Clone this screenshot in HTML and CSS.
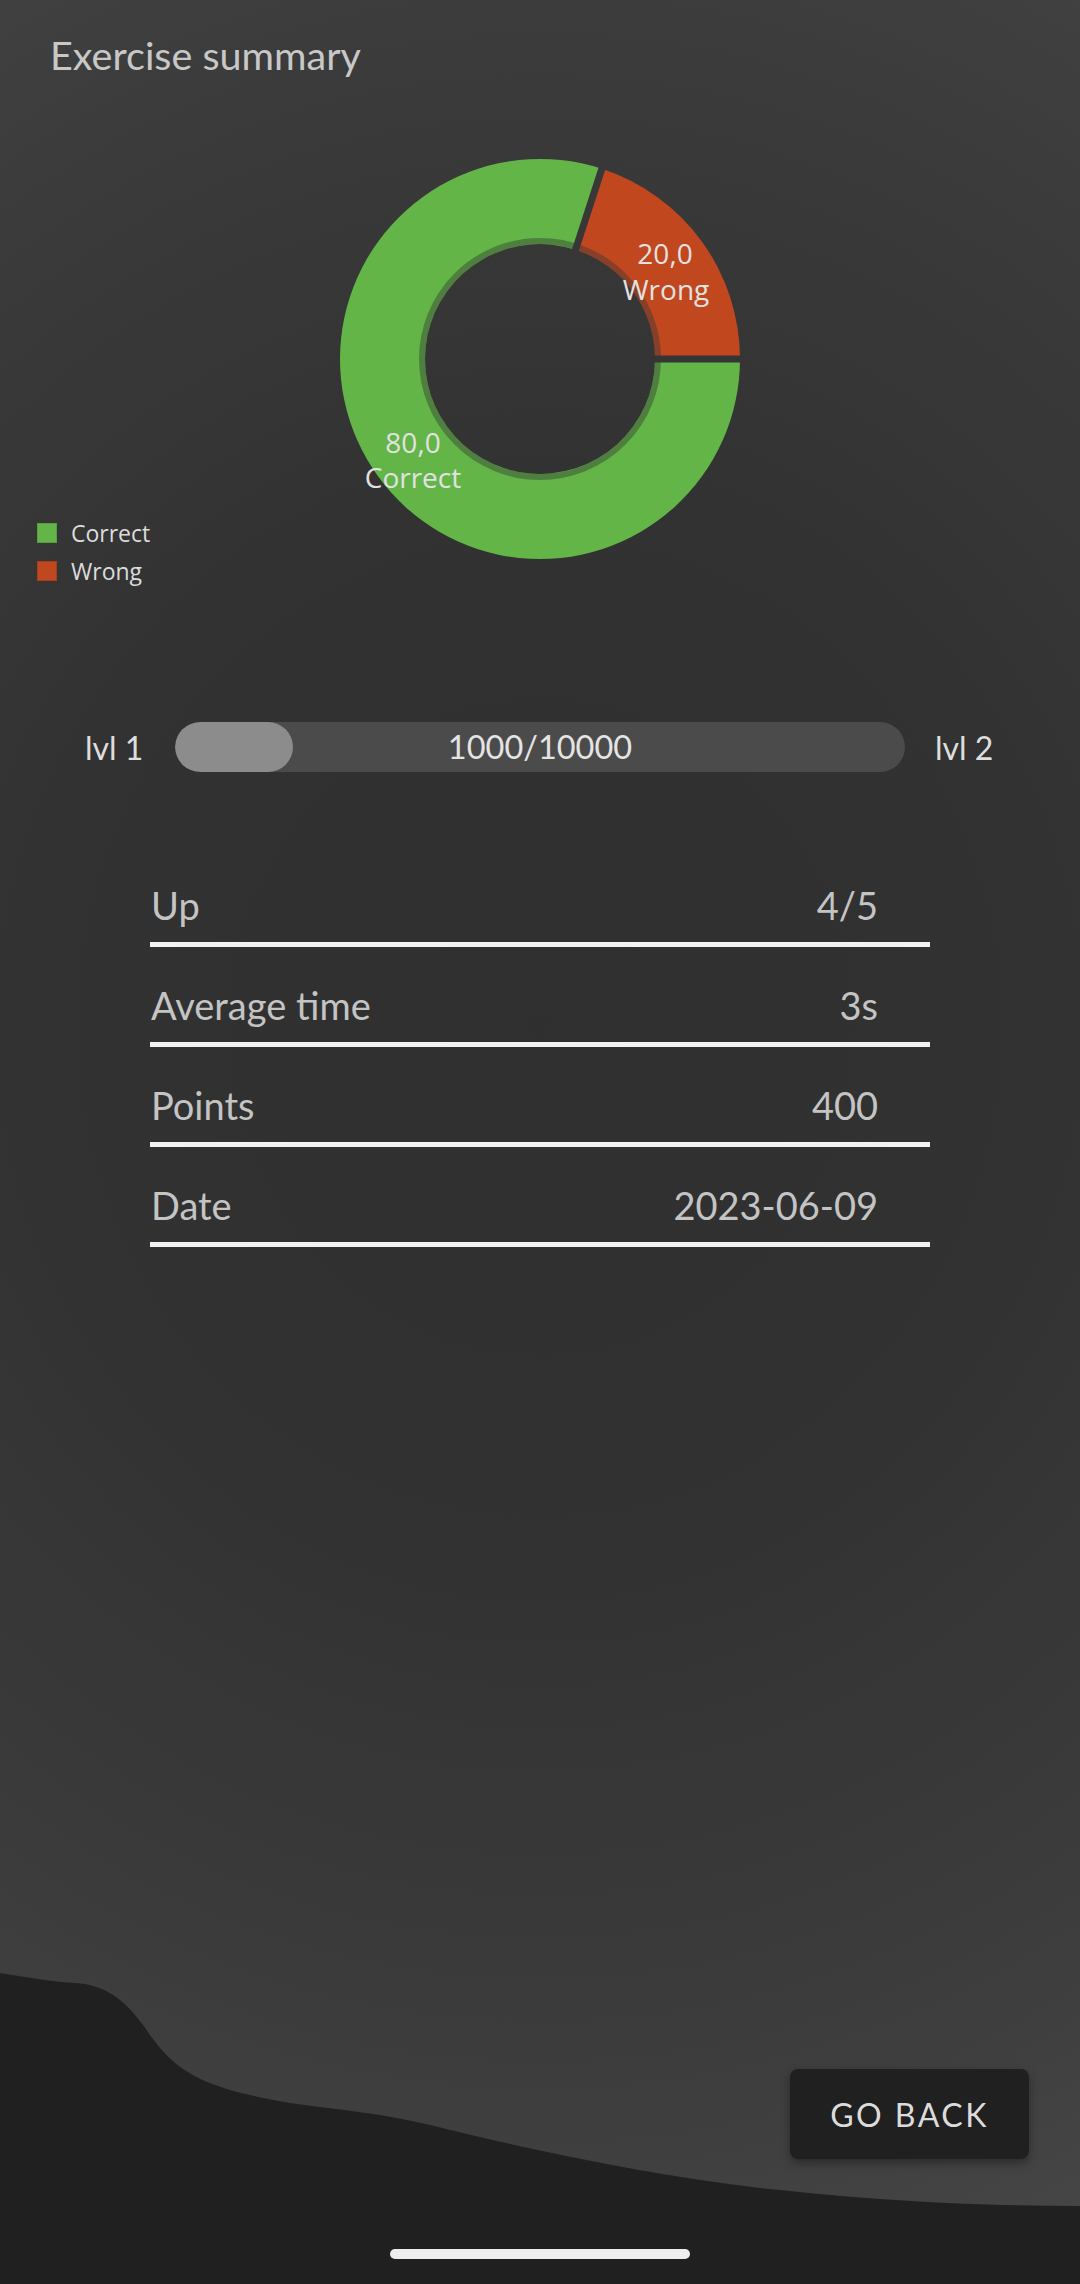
FILE: index.html
```html
<!DOCTYPE html>
<html lang="en">
<head>
<meta charset="utf-8">
<title>Exercise summary</title>
<link rel="stylesheet" href="styles.css">
</head>
<body>
<div class="screen">
  <svg class="wave" viewBox="0 1960 1080 324" width="1080" height="324" aria-hidden="true">
    <path d="M0 1973 C 30 1978, 55 1982, 75 1983 C 110 1985, 130 2005, 150 2035 C 175 2070, 200 2088, 290 2103 C 340 2110, 380 2113, 430 2125 C 530 2150, 650 2175, 760 2188 C 880 2201, 980 2206, 1080 2206 L 1080 2284 L 0 2284 Z" fill="#202020"/>
  </svg>

  <h1 class="title">Exercise summary</h1>

  <section class="chart-area">
    <ul class="legend">
      <li class="legend-item"><span class="swatch swatch-correct"></span>Correct</li>
      <li class="legend-item"><span class="swatch swatch-wrong"></span>Wrong</li>
    </ul>
    <svg class="donut" width="420" height="440" viewBox="0 0 420 440">
      <defs>
        <mask id="gaps" maskUnits="userSpaceOnUse" x="0" y="0" width="420" height="440">
          <rect x="0" y="0" width="420" height="440" fill="#fff"/>
          <line x1="210" y1="210" x2="420" y2="210" stroke="#000" stroke-width="7"/>
          <line x1="210" y1="210" x2="274.9" y2="10.3" stroke="#000" stroke-width="7"/>
        </mask>
      </defs>
      <g mask="url(#gaps)">
        <path d="M 410 210 A 200 200 0 0 0 271.80 19.79 L 245.54 100.63 A 115 115 0 0 1 325 210 Z" fill="#c1471f"/>
        <path d="M 271.80 19.79 A 200 200 0 1 0 410 210 L 325 210 A 115 115 0 1 1 245.54 100.63 Z" fill="#63b547"/>
        <circle cx="210" cy="210" r="118" fill="none" stroke="rgba(52,52,52,0.42)" stroke-width="6"/>
      </g>
      <text class="slice-label" x="335" y="115">20,0</text>
      <text class="slice-label" x="336" y="151">Wrong</text>
      <text class="slice-label" x="83" y="304">80,0</text>
      <text class="slice-label" x="83" y="339">Correct</text>
    </svg>
    <div class="spacer"></div>
  </section>

  <section class="level">
    <span class="level-label">lvl 1</span>
    <div class="bar">
      <div class="bar-track"><div class="bar-fill" style="width: 16.2%"></div></div>
      <span class="bar-text">1000/10000</span>
    </div>
    <span class="level-label">lvl 2</span>
  </section>

  <section class="stats">
    <div class="stat-row"><span>Up</span><span class="stat-value">4/5</span></div>
    <div class="stat-row"><span>Average time</span><span class="stat-value">3s</span></div>
    <div class="stat-row"><span>Points</span><span class="stat-value">400</span></div>
    <div class="stat-row"><span>Date</span><span class="stat-value">2023-06-09</span></div>
  </section>

  <button class="go-back" type="button">GO BACK</button>
  <div class="home-indicator"></div>
</div>
</body>
</html>
```

FILE: styles.css
```css
* { box-sizing: border-box; }

html, body {
  margin: 0;
  padding: 0;
}

body {
  width: 1080px;
  height: 2284px;
  overflow: hidden;
  font-family: Lato, "Noto Sans", sans-serif;
}

.screen {
  position: relative;
  width: 1080px;
  height: 2284px;
  overflow: hidden;
  background: radial-gradient(ellipse 1296px 1370px at 50% 45%, #2f2f2f 0%, #323232 40%, #3c3c3c 75%, #474747 100%);
}

.wave {
  position: absolute;
  left: 0;
  top: 1960px;
  display: block;
}

.title {
  position: relative;
  margin: 0;
  padding: 31px 50px 0;
  font-size: 39.5px;
  line-height: 47px;
  font-weight: 400;
  color: #c8c8c8;
}

.chart-area {
  position: relative;
  display: grid;
  grid-template-columns: 1fr 420px 1fr;
  margin-top: 71px;
}

.donut {
  display: block;
}

.slice-label {
  font-family: "Open Sans", sans-serif;
  font-size: 28px;
  fill: #e2e2e2;
  text-anchor: middle;
}

.legend {
  list-style: none;
  margin: 0 0 -1px;
  padding: 0 0 0 37px;
  align-self: end;
}

.legend-item {
  display: flex;
  align-items: center;
  gap: 14px;
  height: 38px;
  font-family: "Open Sans", sans-serif;
  font-size: 23px;
  color: #dcdcdc;
}

.swatch {
  width: 20px;
  height: 20px;
  flex: none;
}

.swatch-correct { background: #63b547; border: 1px solid #55a03c; }
.swatch-wrong { background: #c1471f; border: 1px solid #a83d1b; }

.level {
  position: relative;
  display: flex;
  align-items: center;
  justify-content: center;
  gap: 30px;
  margin-top: 133px;
  height: 50px;
}

.level-label {
  font-size: 32px;
  color: #dedede;
  width: 60px;
}

.bar {
  display: grid;
  width: 730px;
  height: 50px;
}

.bar-track,
.bar-text {
  grid-area: 1 / 1;
}

.bar-track {
  background: #4b4b4b;
  border-radius: 25px;
  overflow: hidden;
}

.bar-fill {
  height: 100%;
  background: #8c8c8c;
  border-radius: 25px;
}

.bar-text {
  position: relative;
  align-self: center;
  justify-self: center;
  font-size: 32.5px;
  line-height: 50px;
  color: #e4e4e4;
}

.stats {
  position: relative;
  width: 780px;
  margin: 75px auto 0;
}

.stat-row {
  display: flex;
  justify-content: space-between;
  padding: 36px 52px 15px 1px;
  font-size: 38px;
  line-height: 44px;
  color: #c4c4c4;
  border-bottom: 5px solid #f2f2f2;
}

.go-back {
  position: absolute;
  left: 790px;
  top: 2069px;
  width: 239px;
  height: 90px;
  border: none;
  border-radius: 8px;
  background: #202020;
  box-shadow: 0 4px 10px rgba(0, 0, 0, 0.35);
  color: #dcdcdc;
  font-family: Lato, "Noto Sans", sans-serif;
  font-size: 32px;
  letter-spacing: 2.5px;
  padding: 0;
}

.home-indicator {
  position: absolute;
  left: 390px;
  top: 2249px;
  width: 300px;
  height: 10px;
  border-radius: 5px;
  background: #eeeeee;
}
```
